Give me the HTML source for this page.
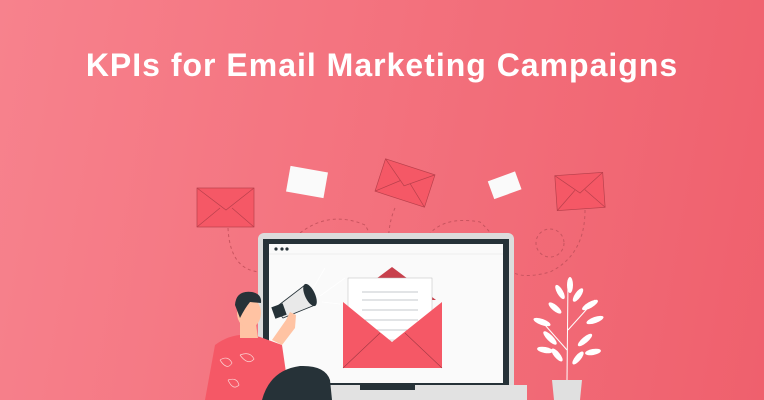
<!DOCTYPE html>
<html><head><meta charset="utf-8"><style>
html,body{margin:0;padding:0}
body{width:764px;height:400px;overflow:hidden;position:relative;background:linear-gradient(100deg,#f7828d 0%,#f3717d 50%,#ef606d 100%);font-family:"Liberation Sans",sans-serif}
h1{position:absolute;top:47px;left:0;width:764px;margin:0;text-align:center;color:#fff;font-size:32px;font-weight:bold;letter-spacing:1px}
svg{position:absolute;left:0;top:0}
</style></head><body>
<h1>KPIs for Email Marketing Campaigns</h1>
<svg width="764" height="400" viewBox="0 0 764 400">
<g fill="none" stroke="#c8545f" stroke-width="1" stroke-dasharray="3,3">
<path d="M228 228 Q230 270 260 272"/>
<path d="M300 233 Q330 210 365 225 Q375 240 372 270"/>
<path d="M395 208 Q385 230 390 268"/>
<path d="M425 240 Q440 215 480 222 Q495 235 500 252"/>
<path d="M420 240 Q410 255 412 270"/>
<path d="M585 210 Q585 255 550 272 Q520 280 510 270"/>
<circle cx="550" cy="243" r="14"/>
</g>
<g stroke="#b9404c" stroke-width="0.7">
<rect x="197" y="188" width="57" height="39" fill="#f55866"/>
<path d="M197 188 L226 210 L254 188 M197 227 L220 208 M254 227 L232 208" fill="none"/>
<g transform="rotate(18 405 183)"><rect x="379" y="166" width="52" height="34" fill="#f55866"/><path d="M379 166 L405 186 L431 166 M379 200 L400 182 M431 200 L410 182" fill="none"/></g>
<g transform="rotate(-4 580 192)"><rect x="556" y="174" width="48" height="35" fill="#f55866"/><path d="M556 174 L580 193 L604 174 M556 209 L575 190 M604 209 L585 190" fill="none"/></g>
</g>
<g transform="rotate(10 307 182)"><rect x="288" y="169" width="38" height="26" fill="#fafafa"/></g>
<g transform="rotate(-20 504 185)"><rect x="490" y="176" width="29" height="19" fill="#fafafa"/></g>
<rect x="258" y="233" width="256" height="160" rx="6" fill="#dcdcdc"/>
<rect x="263" y="239" width="246" height="146" fill="#263238"/>
<rect x="269" y="244" width="234" height="139" fill="#fafafa"/>
<line x1="269" y1="254" x2="503" y2="254" stroke="#eee" stroke-width="1"/>
<circle cx="276" cy="249" r="1.6" fill="#263238"/><circle cx="282" cy="249" r="1.6" fill="#263238"/><circle cx="287" cy="249" r="1.6" fill="#263238"/>
<rect x="240" y="385" width="287" height="15" fill="#e2e2e2"/>
<rect x="360" y="385" width="55" height="5" fill="#263238"/>
<path d="M348 300 L392 267 L436 300 Z" fill="#c8404c"/>
<rect x="348" y="278" width="84" height="62" fill="#fff" stroke="#bbb" stroke-width="0.5"/>
<g stroke="#b0b8bd" stroke-width="0.8"><line x1="362" y1="292" x2="418" y2="292"/><line x1="362" y1="300" x2="418" y2="300"/><line x1="362" y1="310" x2="418" y2="310"/><line x1="362" y1="320" x2="418" y2="320"/><line x1="362" y1="330" x2="418" y2="330"/></g>
<path d="M343 302 L392 342 L442 302 L442 368 L343 368 Z" fill="#f55866"/>
<path d="M343 368 L380 333 M442 368 L405 333" stroke="#a33a44" stroke-width="0.6"/>
<g stroke="#fff" stroke-width="0.8"><line x1="312" y1="290" x2="325" y2="268"/><line x1="320" y1="296" x2="345" y2="278"/><line x1="322" y1="302" x2="340" y2="304"/></g>
<path d="M275 308 L305 285 L315 305 L283 318 Z" fill="#e9e9e9" stroke="#263238" stroke-width="0.8"/>
<ellipse cx="310" cy="295" rx="5" ry="12" transform="rotate(-25 310 295)" fill="#263238"/>
<rect x="273" y="305" width="12" height="12" fill="#263238" transform="rotate(-20 279 311)"/>
<path d="M205 400 L215 345 Q235 330 260 337 L282 345 L290 400 Z" fill="#f55866"/>
<path d="M282 345 L295 328 L296 315 L290 312 L286 320 L272 340 Z" fill="#ffc3a3"/>
<path d="M240 318 L240 338 L258 338 L255 318 Z" fill="#ffc3a3"/>
<ellipse cx="249" cy="313" rx="12" ry="15" fill="#ffc3a3"/>
<path d="M235 305 Q236 290 252 292 Q262 294 261 303 L250 302 Q245 308 240 318 Z" fill="#263238"/>
<path d="M262 400 Q270 370 300 366 Q325 365 330 380 L332 400 Z" fill="#263238"/>
<g fill="none" stroke="#fbd3d3" stroke-width="0.7"><path d="M220 360 q8 -5 12 3 q-5 8 -12 -3"/><path d="M240 355 q10 -4 14 4 q-6 7 -14 -4"/><path d="M228 380 q9 -3 11 5 q-6 6 -11 -5"/></g>
<path d="M552 380 L582 380 L580 400 L554 400 Z" fill="#e0e0e0"/>
<g stroke="#fff" stroke-width="1" fill="none"><line x1="567" y1="380" x2="568" y2="280"/><line x1="567" y1="350" x2="545" y2="325"/><line x1="568" y1="330" x2="595" y2="300"/></g>
<g fill="#fff">
<ellipse cx="570" cy="285" rx="3" ry="8"/><ellipse cx="560" cy="292" rx="3" ry="8" transform="rotate(-30 560 292)"/><ellipse cx="578" cy="295" rx="3" ry="8" transform="rotate(35 578 295)"/>
<ellipse cx="555" cy="308" rx="3" ry="8" transform="rotate(-50 555 308)"/><ellipse cx="590" cy="305" rx="3" ry="9" transform="rotate(60 590 305)"/>
<ellipse cx="542" cy="322" rx="3" ry="9" transform="rotate(-70 542 322)"/><ellipse cx="595" cy="320" rx="3" ry="9" transform="rotate(70 595 320)"/>
<ellipse cx="550" cy="338" rx="3" ry="9" transform="rotate(-45 550 338)"/><ellipse cx="585" cy="340" rx="3" ry="9" transform="rotate(50 585 340)"/>
<ellipse cx="557" cy="355" rx="3" ry="8" transform="rotate(-40 557 355)"/><ellipse cx="578" cy="358" rx="3" ry="8" transform="rotate(40 578 358)"/>
<ellipse cx="545" cy="350" rx="3" ry="8" transform="rotate(-80 545 350)"/><ellipse cx="593" cy="352" rx="3" ry="8" transform="rotate(80 593 352)"/>
</g>
</svg>
</body></html>
